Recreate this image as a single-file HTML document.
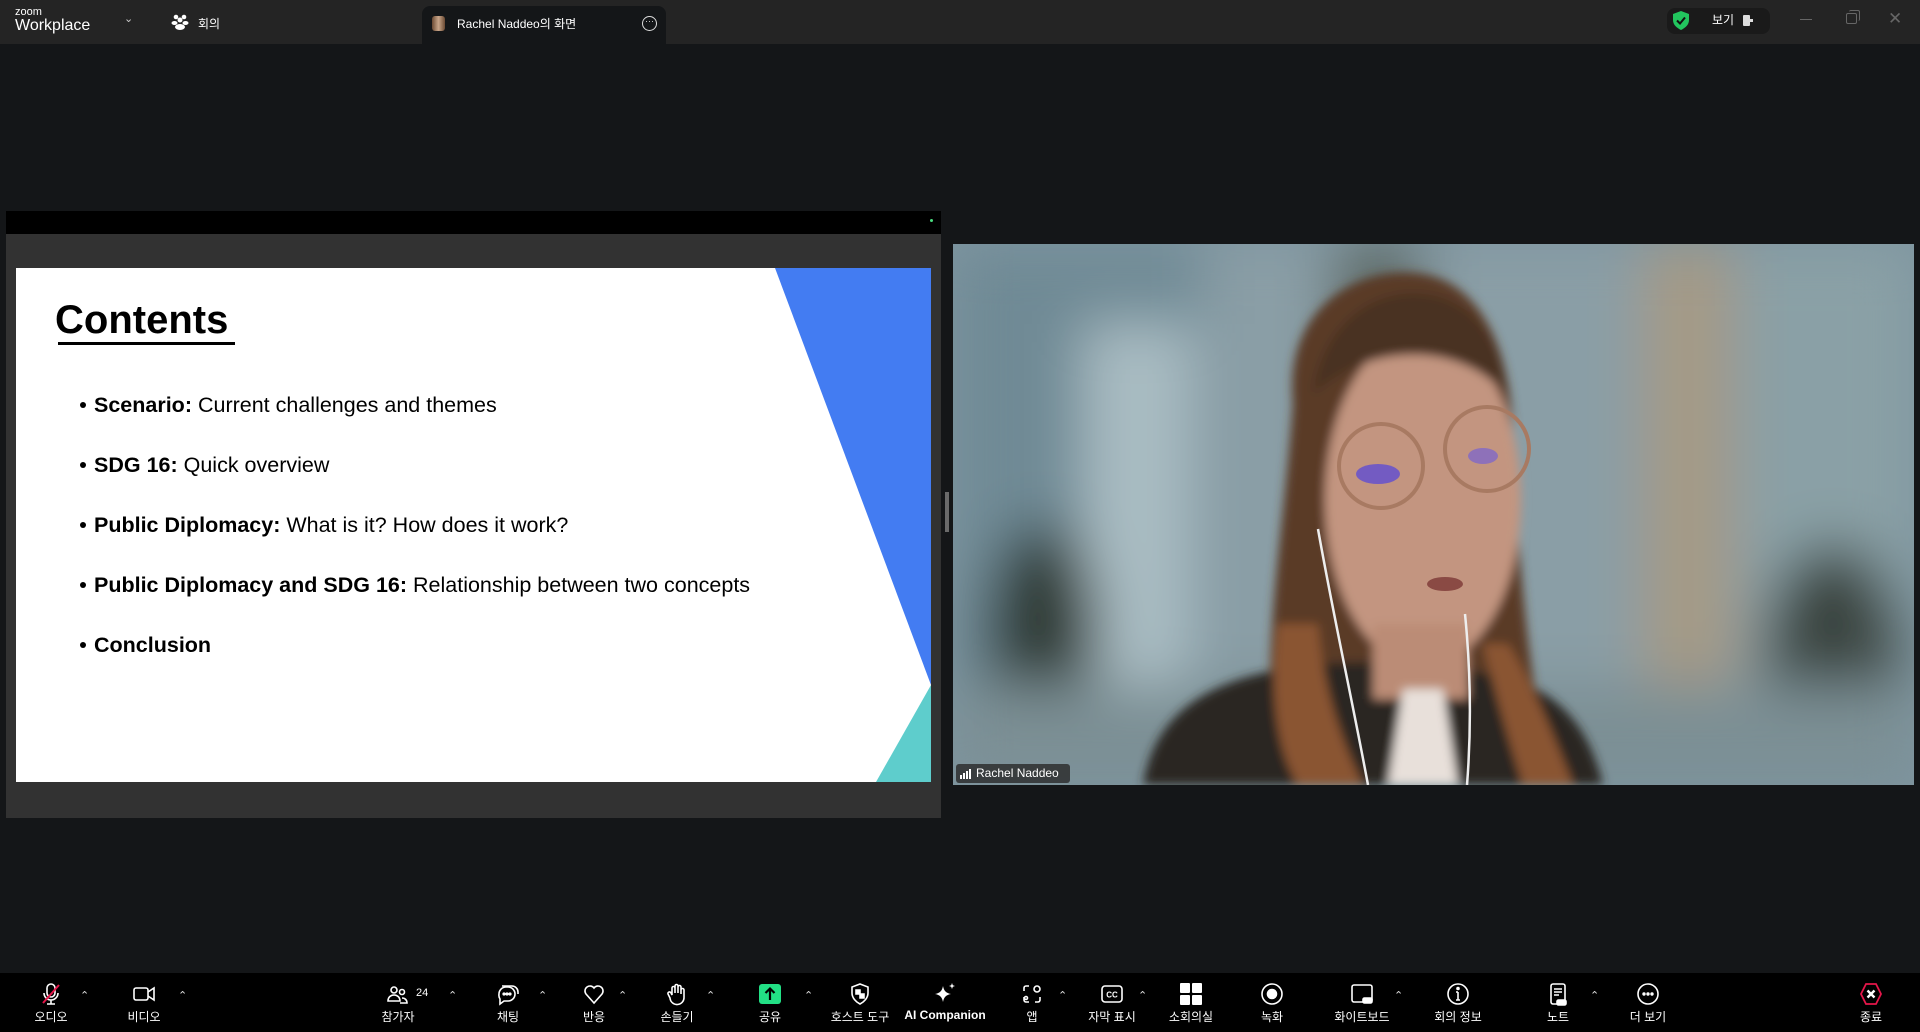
<!DOCTYPE html>
<html><head><meta charset="utf-8">
<style>
*{margin:0;padding:0;box-sizing:border-box}
body{width:1920px;height:1032px;overflow:hidden;background:#141618;font-family:"Liberation Sans","Noto Sans CJK KR",sans-serif;position:relative;color:#fff}
.top{position:absolute;left:0;top:0;width:1920px;height:44px;background:#242424}
.abs{position:absolute}
.tb{position:absolute;left:0;top:973px;width:1920px;height:59px;background:#000}
.it{position:absolute;top:0;width:110px;margin-left:-55px;text-align:center}
.it svg{position:absolute;left:43px;top:9px}
.it .l{position:absolute;top:35px;left:0;width:110px;font-size:12px;color:#fff;text-align:center}
.car{position:absolute;top:16px;font-size:11px;color:#ddd}
.sl{position:absolute;left:78px;font-size:21.5px;color:#000;white-space:nowrap}
.sl b{font-weight:bold}
.dot{position:absolute;left:-14px;top:9px;width:6px;height:6px;border-radius:50%;background:#000}
</style></head><body>
<div class="top"></div>
<div class="abs" style="left:15px;top:7px;font-size:11px;color:#fff;line-height:11px">zoom</div>
<div class="abs" style="left:15px;top:17px;font-size:16px;color:#fff;line-height:18px">Workplace</div>
<div class="abs" style="left:124px;top:12px;font-size:11px;color:#ccc">⌄</div>
<svg class="abs" style="left:171px;top:14px" width="18" height="16" viewBox="0 0 18 16"><circle cx="5" cy="3" r="2.3" fill="#fff"/><circle cx="13" cy="3" r="2.3" fill="#fff"/><circle cx="9" cy="6" r="2.5" fill="#fff"/><ellipse cx="9" cy="13" rx="5" ry="3" fill="#fff"/><ellipse cx="3.5" cy="9" rx="3" ry="2" fill="#fff"/><ellipse cx="14.5" cy="9" rx="3" ry="2" fill="#fff"/></svg>
<div class="abs" style="left:198px;top:15px;font-size:12px;color:#fff">회의</div>
<div class="abs" style="left:422px;top:6px;width:244px;height:38px;background:#141618;border-radius:8px 8px 0 0"></div>
<div class="abs" style="left:432px;top:16px;width:13px;height:15px;border-radius:3px;background:linear-gradient(90deg,#6b4a33,#c9a68a,#6b4a33)"></div>
<div class="abs" style="left:457px;top:15px;font-size:12px;color:#fff">Rachel Naddeo의 화면</div>
<div class="abs" style="left:642px;top:16px;width:15px;height:15px;border:1.5px solid #ddd;border-radius:50%;font-size:9px;line-height:9px;text-align:center;color:#ddd">···</div>
<div class="abs" style="left:1667px;top:8px;width:103px;height:26px;background:#1a1a1a;border-radius:8px"></div>
<svg class="abs" style="left:1673px;top:11px" width="16" height="19" viewBox="0 0 16 19"><path d="M8 0L16 3V9C16 14 12 17 8 19C4 17 0 14 0 9V3Z" fill="#22c55e"/><path d="M4 9.5L7 12.5L12 6.5" stroke="#111" stroke-width="2" fill="none"/></svg>
<div class="abs" style="left:1712px;top:11px;font-size:12px;color:#fff">보기</div>
<div class="abs" style="left:1743px;top:15px;width:7px;height:11px;background:#ddd;border-radius:1px"></div>
<div class="abs" style="left:1750px;top:19px;width:3px;height:3px;background:#ddd"></div>
<div class="abs" style="left:1800px;top:19px;width:12px;height:1px;background:#666"></div>
<div class="abs" style="left:1846px;top:13px;width:11px;height:11px;border:1px solid #666;border-radius:2px"></div>
<div class="abs" style="left:1849px;top:10px;width:11px;height:11px;border-top:1px solid #666;border-right:1px solid #666;border-radius:2px"></div>
<div class="abs" style="left:1888px;top:9px;font-size:17px;color:#666;line-height:20px">✕</div>

<!-- share panel -->
<div class="abs" style="left:6px;top:211px;width:935px;height:23px;background:#000"></div>
<div class="abs" style="left:930px;top:219px;width:3px;height:3px;border-radius:50%;background:#4ade80"></div>
<div class="abs" style="left:6px;top:234px;width:935px;height:584px;background:#323232"></div>
<div class="abs" style="left:16px;top:268px;width:915px;height:514px;background:#fff;overflow:hidden">
<svg class="abs" style="left:0;top:0" width="915" height="514"><polygon points="759,0 915,0 915,417" fill="#437cf2"/><polygon points="915,417 915,514 860,514" fill="#5ecdcc"/></svg>
<div class="abs" style="left:39px;top:29px;font-size:40px;font-weight:bold;color:#000;line-height:46px">Contents</div>
<div class="abs" style="left:42px;top:74px;width:177px;height:3px;background:#000"></div>
<div class="sl" style="top:125px"><span class="dot"></span><b>Scenario:</b> Current challenges and themes</div>
<div class="sl" style="top:185px"><span class="dot"></span><b>SDG 16:</b> Quick overview</div>
<div class="sl" style="top:245px"><span class="dot"></span><b>Public Diplomacy:</b> What is it? How does it work?</div>
<div class="sl" style="top:305px"><span class="dot"></span><b>Public Diplomacy and SDG 16:</b> Relationship between two concepts</div>
<div class="sl" style="top:365px"><span class="dot"></span><b>Conclusion</b></div>
</div>
<div class="abs" style="left:945px;top:492px;width:4px;height:40px;background:#6a6a6a"></div>

<!-- video -->
<div class="abs" style="left:953px;top:244px;width:961px;height:541px;overflow:hidden;background:#7e95a0">
<svg width="961" height="541" viewBox="0 0 961 541">
<defs><filter id="b" x="-20%" y="-20%" width="140%" height="140%"><feGaussianBlur stdDeviation="28"/></filter><filter id="s"><feGaussianBlur stdDeviation="5"/></filter></defs>
<g filter="url(#b)">
<rect width="961" height="541" fill="#8a9ea6"/>
<rect x="0" y="0" width="250" height="541" fill="#6f8a95"/>
<rect x="130" y="80" width="110" height="420" fill="#a9bcc2"/>
<rect x="380" y="0" width="90" height="541" fill="#5f6a66"/>
<rect x="690" y="0" width="90" height="541" fill="#a59a85"/>
<rect x="800" y="0" width="161" height="541" fill="#8aa0a6"/>
<ellipse cx="90" cy="390" rx="55" ry="110" fill="#2e3a36"/>
<ellipse cx="880" cy="420" rx="70" ry="120" fill="#3a4440"/>
<rect x="0" y="440" width="961" height="101" fill="#7b8f94"/>
</g>
<g filter="url(#s)">
<path d="M340 160C330 60 410 20 470 30C530 40 560 110 560 200C565 330 580 460 600 541H330C300 450 330 300 340 160Z" fill="#5a3a26"/>
<path d="M190 541C200 480 240 440 330 425C380 415 470 415 560 435C620 455 640 500 650 541Z" fill="#2a2624"/>
<path d="M325 380C315 450 325 510 345 541H410C385 490 370 440 365 380Z" fill="#8a5533"/>
<path d="M530 400C545 460 560 510 570 541H620C600 490 580 440 555 400Z" fill="#8a5533"/>
<ellipse cx="470" cy="255" rx="98" ry="168" fill="#c39580"/>
<path d="M360 150C370 80 420 45 470 50C520 55 550 100 552 150C510 100 420 95 360 150Z" fill="#4a3020"/>
<rect x="420" y="380" width="95" height="75" fill="#bb8c76"/>
<path d="M435 541L450 445L490 445L505 541Z" fill="#e8e0da"/>
</g>
<circle cx="428" cy="222" r="42" fill="none" stroke="#a87a62" stroke-width="4"/>
<circle cx="534" cy="205" r="42" fill="none" stroke="#a87a62" stroke-width="4"/>
<ellipse cx="425" cy="230" rx="22" ry="10" fill="#5848d8" opacity=".75"/>
<ellipse cx="530" cy="212" rx="15" ry="8" fill="#6a5ae0" opacity=".6"/>
<ellipse cx="492" cy="340" rx="18" ry="7" fill="#8a4a44"/>
<path d="M365 285C380 370 400 460 415 541" stroke="#eee" stroke-width="2.5" fill="none"/>
<path d="M512 370C518 430 518 490 514 541" stroke="#eee" stroke-width="2.5" fill="none"/>
</svg>
<div class="abs" style="left:3px;top:520px;width:114px;height:19px;background:rgba(40,40,40,.8);border-radius:3px;font-size:12px;line-height:19px;padding-left:20px;color:#fff">Rachel Naddeo</div>
<svg class="abs" style="left:7px;top:525px" width="11" height="10"><rect x="0" y="6" width="2" height="4" fill="#fff"/><rect x="3" y="4" width="2" height="6" fill="#fff"/><rect x="6" y="2" width="2" height="8" fill="#fff"/><rect x="9" y="0" width="2" height="10" fill="#fff"/></svg>
</div>

<!-- toolbar -->
<div class="tb">
<div class="it" style="left:51px"><svg width="24" height="24" viewBox="0 0 24 24" fill="none" stroke="#fff" stroke-width="1.6"><rect x="8" y="2" width="8" height="13" rx="4"/><path d="M5 11a7 7 0 0 0 14 0M12 18v4M8 22h8"/><path d="M4 21L20 3" stroke="#e5164a" stroke-width="2"/></svg><div class="l">오디오</div></div>
<div class="car" style="left:80px">⌃</div>
<div class="it" style="left:144px"><svg width="24" height="24" viewBox="0 0 24 24" fill="none" stroke="#fff" stroke-width="1.6"><rect x="2" y="6" width="14" height="12" rx="2"/><path d="M16 10l6-4v12l-6-4"/></svg><div class="l">비디오</div></div>
<div class="car" style="left:178px">⌃</div>
<div class="it" style="left:398px"><svg width="24" height="24" viewBox="0 0 24 24" fill="none" stroke="#fff" stroke-width="1.6"><circle cx="8" cy="8" r="3"/><path d="M2 19c0-4 3-6 6-6s6 2 6 6z"/><circle cx="16" cy="10" r="2.5"/><path d="M14 21h7c0-3-2-5-5-5"/></svg><div class="l">참가자</div></div>
<div class="abs" style="left:416px;top:14px;font-size:11px">24</div>
<div class="car" style="left:448px">⌃</div>
<div class="it" style="left:508px"><svg width="24" height="24" viewBox="0 0 24 24" fill="none" stroke="#fff" stroke-width="1.6"><path d="M6 4h10a6 6 0 0 1 6 6v2"/><path d="M3 12a7 7 0 0 1 7-7h2a7 7 0 0 1 0 14H8l-4 3v-5a7 7 0 0 1-1-5z"/><circle cx="8" cy="12" r=".8" fill="#fff"/><circle cx="11" cy="12" r=".8" fill="#fff"/><circle cx="14" cy="12" r=".8" fill="#fff"/></svg><div class="l">채팅</div></div>
<div class="car" style="left:538px">⌃</div>
<div class="it" style="left:594px"><svg width="24" height="24" viewBox="0 0 24 24" fill="none" stroke="#fff" stroke-width="1.6"><path d="M12 21L4 12a5 5 0 0 1 8-6 5 5 0 0 1 8 6z"/></svg><div class="l">반응</div></div>
<div class="car" style="left:618px">⌃</div>
<div class="it" style="left:677px"><svg width="24" height="24" viewBox="0 0 24 24" fill="none" stroke="#fff" stroke-width="1.6"><path d="M7 13V6a1.5 1.5 0 0 1 3 0v5V4a1.5 1.5 0 0 1 3 0v7V5a1.5 1.5 0 0 1 3 0v7-4a1.5 1.5 0 0 1 3 0v7a7 7 0 0 1-14 1l-2-4a1.5 1.5 0 0 1 3-1z"/></svg><div class="l">손들기</div></div>
<div class="car" style="left:706px">⌃</div>
<div class="it" style="left:770px"><svg width="24" height="24" viewBox="0 0 24 24"><rect x="1" y="2" width="22" height="20" rx="3" fill="#22e085"/><path d="M12 18V7M7.5 11L12 6.5 16.5 11" stroke="#000" stroke-width="2.2" fill="none"/></svg><div class="l">공유</div></div>
<div class="car" style="left:804px">⌃</div>
<div class="it" style="left:860px"><svg width="24" height="24" viewBox="0 0 24 24" fill="none" stroke="#fff" stroke-width="1.6"><path d="M12 2l8 3v6c0 5-4 9-8 11-4-2-8-6-8-11V5z"/><path d="M8 8h4v4H8zM12 12h4v4h-4z" fill="#fff"/></svg><div class="l">호스트 도구</div></div>
<div class="it" style="left:945px"><svg width="24" height="24" viewBox="0 0 24 24" fill="#fff"><path d="M10 4c1 5 3 7 8 8-5 1-7 3-8 8-1-5-3-7-8-8 5-1 7-3 8-8z"/><path d="M19 1l.8 2.2L22 4l-2.2.8L19 7l-.8-2.2L16 4l2.2-.8z"/></svg><div class="l" style="font-weight:bold">AI Companion</div></div>
<div class="it" style="left:1032px"><svg width="24" height="24" viewBox="0 0 24 24" fill="none" stroke="#fff" stroke-width="1.6"><path d="M9 4H6a2 2 0 0 0-2 2v3M4 15v3a2 2 0 0 0 2 2h3M15 20h3a2 2 0 0 0 2-2v-3"/><circle cx="17" cy="7" r="3"/><circle cx="6" cy="16" r="1.5"/></svg><div class="l">앱</div></div>
<div class="car" style="left:1058px">⌃</div>
<div class="it" style="left:1112px"><svg width="24" height="24" viewBox="0 0 24 24" fill="none" stroke="#fff" stroke-width="1.6"><rect x="2" y="4" width="20" height="16" rx="3"/><text x="12" y="15.5" font-size="8" font-family="Liberation Sans" fill="#fff" stroke="none" text-anchor="middle" font-weight="bold">CC</text></svg><div class="l">자막 표시</div></div>
<div class="car" style="left:1138px">⌃</div>
<div class="it" style="left:1191px"><svg width="24" height="24" viewBox="0 0 24 24" fill="#fff"><rect x="1" y="1" width="10" height="10" rx="1"/><rect x="13" y="1" width="10" height="10" rx="1"/><rect x="1" y="13" width="10" height="10" rx="1"/><rect x="13" y="13" width="10" height="10" rx="1"/></svg><div class="l">소회의실</div></div>
<div class="it" style="left:1272px"><svg width="24" height="24" viewBox="0 0 24 24" fill="none" stroke="#fff" stroke-width="1.6"><circle cx="12" cy="12" r="10"/><circle cx="12" cy="12" r="4.5" fill="#fff"/></svg><div class="l">녹화</div></div>
<div class="it" style="left:1362px"><svg width="24" height="24" viewBox="0 0 24 24" fill="none" stroke="#fff" stroke-width="1.6"><rect x="2" y="3" width="20" height="17" rx="2"/><rect x="13" y="16" width="9" height="5" rx="1.5" fill="#fff"/></svg><div class="l">화이트보드</div></div>
<div class="car" style="left:1394px">⌃</div>
<div class="it" style="left:1458px"><svg width="24" height="24" viewBox="0 0 24 24" fill="none" stroke="#fff" stroke-width="1.6"><circle cx="12" cy="12" r="10"/><path d="M12 10v8M10 10h2M10 18h4"/><circle cx="12" cy="6.5" r="1" fill="#fff"/></svg><div class="l">회의 정보</div></div>
<div class="it" style="left:1558px"><svg width="24" height="24" viewBox="0 0 24 24" fill="none" stroke="#fff" stroke-width="1.6"><rect x="5" y="2" width="14" height="20" rx="2"/><path d="M8 7h8M8 10h8M8 13h5"/><rect x="11" y="18" width="9" height="5" rx="1.5" fill="#fff"/></svg><div class="l">노트</div></div>
<div class="car" style="left:1590px">⌃</div>
<div class="it" style="left:1648px"><svg width="24" height="24" viewBox="0 0 24 24" fill="none" stroke="#fff" stroke-width="1.6"><circle cx="12" cy="12" r="10"/><circle cx="8" cy="12" r=".9" fill="#fff"/><circle cx="12" cy="12" r=".9" fill="#fff"/><circle cx="16" cy="12" r=".9" fill="#fff"/></svg><div class="l">더 보기</div></div>
<div class="it" style="left:1871px"><svg width="24" height="24" viewBox="0 0 24 24"><path d="M7 2h10l5 10-5 10H7L2 12z" fill="none" stroke="#e5164a" stroke-width="1.8"/><path d="M8.5 8.5l7 7M15.5 8.5l-7 7" stroke="#fff" stroke-width="2.4"/></svg><div class="l">종료</div></div>
</div>
</body></html>
